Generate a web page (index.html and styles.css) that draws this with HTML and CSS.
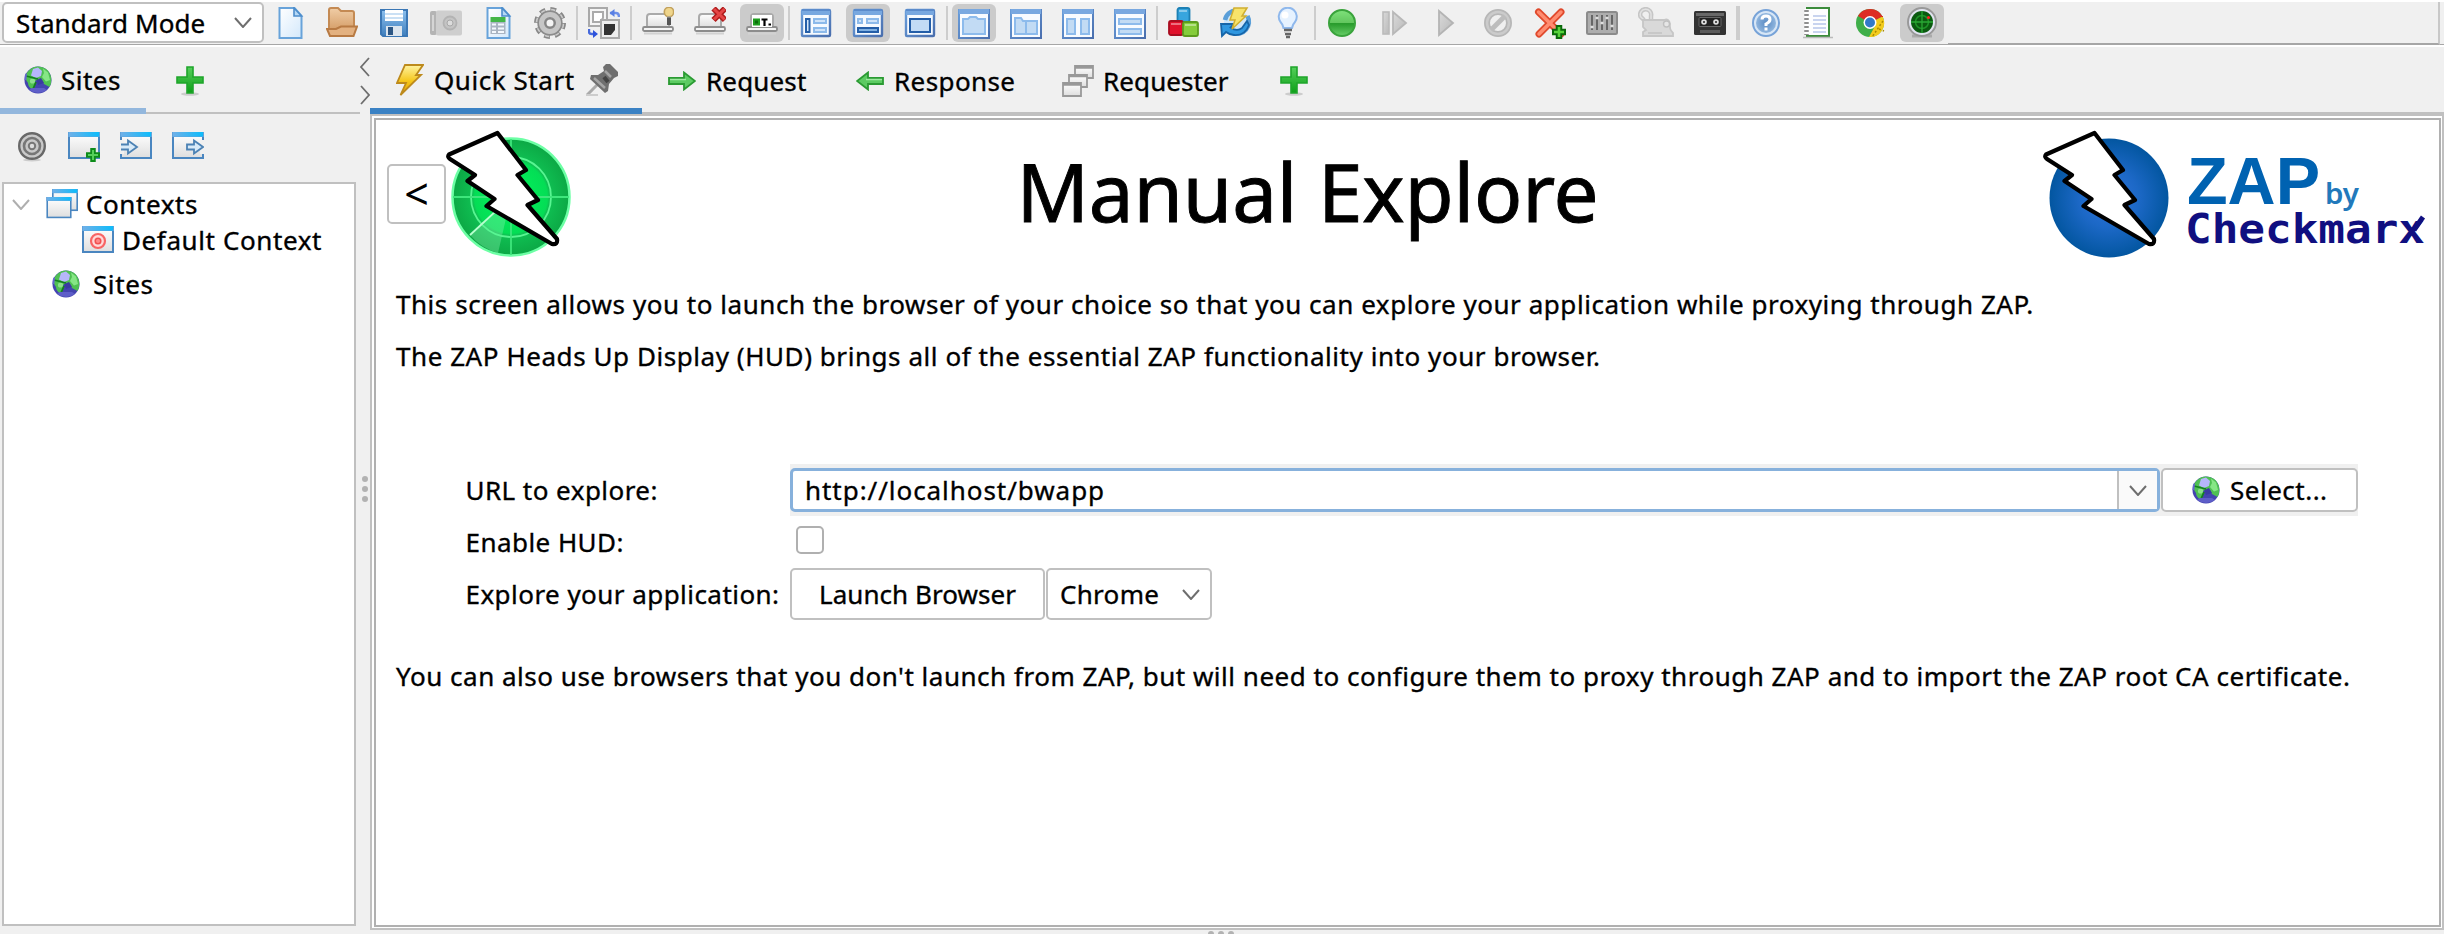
FILE: index.html
```html
<!DOCTYPE html>
<html lang="en">
<head>
<meta charset="utf-8">
<title>ZAP</title>
<link rel="stylesheet" href="styles.css">
</head>
<body>
<svg class="defs" width="0" height="0" aria-hidden="true">
  <defs>
    <linearGradient id="gPaper" x1="0" y1="0" x2="1" y2="1"><stop offset="0" stop-color="#fff"/><stop offset="1" stop-color="#d3e8fb"/></linearGradient>
    <linearGradient id="gFolder" x1="0" y1="0" x2="0" y2="1"><stop offset="0" stop-color="#f0cda6"/><stop offset="1" stop-color="#d39a63"/></linearGradient>
    <linearGradient id="gBlue" x1="0" y1="0" x2="0" y2="1"><stop offset="0" stop-color="#8cc0ee"/><stop offset="1" stop-color="#3f7fbd"/></linearGradient>
    <linearGradient id="gWin" x1="0" y1="0" x2="1" y2="1"><stop offset="0" stop-color="#6a9edb"/><stop offset="1" stop-color="#4a6fae"/></linearGradient>
    <linearGradient id="gBar" x1="0" y1="0" x2="1" y2="0"><stop offset="0" stop-color="#6fb0e8"/><stop offset="1" stop-color="#0cbcfb"/></linearGradient>
    <linearGradient id="gGrey" x1="0" y1="0" x2="0" y2="1"><stop offset="0" stop-color="#fff"/><stop offset="1" stop-color="#dedede"/></linearGradient>
    <linearGradient id="gGreen" x1="0" y1="0" x2="0" y2="1"><stop offset="0" stop-color="#7fe27b"/><stop offset=".5" stop-color="#62c65e"/><stop offset=".52" stop-color="#279a2b"/><stop offset="1" stop-color="#68cf68"/></linearGradient>
    <linearGradient id="gPlus" x1="0" y1="0" x2="0" y2="1"><stop offset="0" stop-color="#55cf5b"/><stop offset="1" stop-color="#0d9f17"/></linearGradient>
    <linearGradient id="gBolt" x1="0" y1="0" x2="0" y2="1"><stop offset="0" stop-color="#fff3a0"/><stop offset=".55" stop-color="#f5c518"/><stop offset="1" stop-color="#e3a400"/></linearGradient>
    <linearGradient id="gDis" x1="0" y1="0" x2="1" y2="1"><stop offset="0" stop-color="#dadada"/><stop offset="1" stop-color="#b9b9b9"/></linearGradient>
    <linearGradient id="gRed" x1="0" y1="0" x2="0" y2="1"><stop offset="0" stop-color="#ff9a80"/><stop offset="1" stop-color="#f0431f"/></linearGradient>
    <radialGradient id="gHelp"><stop offset="0" stop-color="#5c8cc4"/><stop offset="1" stop-color="#8fb5de"/></radialGradient>
    <radialGradient id="gLogoG"><stop offset="0" stop-color="#00f85c"/><stop offset=".62" stop-color="#04dd55"/><stop offset=".66" stop-color="#0fbf52"/><stop offset="1" stop-color="#0ca845"/></radialGradient>
    <radialGradient id="gLogoB"><stop offset="0" stop-color="#2e74dc"/><stop offset=".5" stop-color="#1c68c6"/><stop offset="1" stop-color="#0356a0"/></radialGradient>
  </defs>

  <symbol id="i-doc" viewBox="0 0 32 32"><path d="M5.500 1H20.500L27.500 9V31H5.500Z" fill="url(#gPaper)" stroke="#68a3da" stroke-width="2"/><path d="M20 1V9H27.500Z" fill="#b5d8f6" stroke="#4d8dcb" stroke-width="1.600"/></symbol>
  <symbol id="i-folder" viewBox="0 0 32 32"><path d="M3 23V3Q3 1 5 1H12L15 4H26Q28 4 28 6V25Z" fill="url(#gFolder)" stroke="#c48a53" stroke-width="2"/><path d="M1 22H10L15 19.500H31L27.500 29H4Z" fill="#e3b180" stroke="#b87a43" stroke-width="2"/></symbol>
  <symbol id="i-save" viewBox="0 0 32 32"><path d="M3 3H29V29H5L3 27Z" fill="url(#gBlue)" stroke="#3b77b5" stroke-width="2"/><rect x="7" y="3" width="18" height="11" fill="#fff"/><path d="M7 7H25M7 11H25" stroke="#b9d6f1" stroke-width="1.500"/><rect x="8" y="19" width="16" height="10" fill="#dce5ee"/><rect x="10" y="20" width="5" height="8" fill="#2c5684"/></symbol>
  <symbol id="i-camera" viewBox="0 0 32 32"><rect x="0" y="4" width="7" height="24" rx="2" fill="#b4b4b4"/><rect x="6" y="3.500" width="26" height="25" rx="2" fill="#cecece"/><path d="M3 8V24" stroke="#d5d5d5" stroke-width="2"/><circle cx="20" cy="16" r="6.500" fill="#c4c4c4" stroke="#b3b3b3" stroke-width="1.800"/><circle cx="20" cy="16" r="3" fill="#dcdcdc" stroke="#a8a8a8"/></symbol>
  <symbol id="i-report" viewBox="0 0 32 32"><use href="#i-doc" width="32" height="32"/><rect x="8.500" y="10" width="15" height="5" fill="#43b649"/><path d="M8.500 15H23.500V27H8.500Z" fill="#a9b4c2"/><path d="M10 17.500H14M16 17.500H22M10 21.500H14M16 21.500H22M10 25H14M16 25H22" stroke="#f3f8fd" stroke-width="2"/></symbol>
  <symbol id="i-gear" viewBox="0 0 32 32"><circle cx="16" cy="16" r="13.500" fill="none" stroke="#878787" stroke-width="5" stroke-dasharray="5.600 5"/><circle cx="16" cy="16" r="13" fill="none" stroke="#ccc" stroke-width="2.600" stroke-dasharray="4 6.200" stroke-dashoffset="-.8"/><circle cx="16" cy="16" r="8.700" fill="none" stroke="#8b8b8b" stroke-width="8"/><circle cx="16" cy="16" r="8.500" fill="none" stroke="#c6c6c6" stroke-width="5"/><circle cx="16" cy="16" r="4.400" fill="#f4f4f4" stroke="#858585" stroke-width="1.800"/></symbol>
  <symbol id="i-swap" viewBox="0 0 32 32"><rect x="1" y="1" width="18" height="18" fill="#f5f5f5" stroke="#a9a9a9" stroke-width="2"/><path d="M5 5H15V11L12 15H5Z" fill="#fff" stroke="#aaa" stroke-width="2"/><rect x="13" y="13" width="18" height="18" fill="#eee" stroke="#aaa" stroke-width="2"/><path d="M17 17H27V23L23 28H16V17Z" fill="#333"/><path d="M22 6H28Q31 6 31 10" fill="none" stroke="#6e90e8" stroke-width="2.400"/><path d="M21.500 6L26.500 2V10Z" fill="#5a80e4"/><path d="M1 22V25Q1 27 4 27H6" fill="none" stroke="#4669dc" stroke-width="2.400"/><path d="M10 27L5 23V31Z" fill="#2e53dc"/></symbol>
  <symbol id="i-laptop" viewBox="0 0 32 32"><path d="M5 20V10Q5 7 8 7H24Q27 7 27 10V20Z" fill="url(#gGrey)" stroke="#aaa" stroke-width="2"/><rect x="1" y="20" width="30" height="4" rx="1.500" fill="#f4f4f4" stroke="#8d8d8d" stroke-width="1.800"/><path d="M2 26.500H30" stroke="#d2d2d2" stroke-width="2"/></symbol>
  <symbol id="i-lapbulb" viewBox="0 0 32 32"><use href="#i-laptop" width="32" height="32"/><circle cx="27" cy="5" r="4.700" fill="#efd58b" stroke="#c2a15b" stroke-width="1.600"/><rect x="25" y="10" width="4" height="8" fill="#555"/><path d="M25 10H29" stroke="#aaa"/></symbol>
  <symbol id="i-lapx" viewBox="0 0 32 32"><use href="#i-laptop" width="32" height="32"/><path d="M19.500 1.500L31 13M31 1.500L19.500 13" stroke="#b01c1c" stroke-width="6"/><path d="M20 2L30.500 12.500M30.500 2L20 12.500" stroke="#e54545" stroke-width="3"/></symbol>
  <symbol id="i-lapterm" viewBox="0 0 32 32"><use href="#i-laptop" width="32" height="32"/><rect x="6" y="8" width="20" height="12" fill="#fff"/><rect x="8" y="12.500" width="5" height="5" fill="#0a6b0a" stroke="#1d9d1d" stroke-width="2"/><path d="M15.500 12.500H21.500M18.500 12V19M22.500 17.500H25" stroke="#000" stroke-width="2.200"/></symbol>
  <symbol id="i-win" viewBox="0 0 32 32"><rect x="2" y="3" width="28" height="26" rx="1" fill="#f6faff" stroke="url(#gWin)" stroke-width="2.400"/><rect x="2" y="3" width="28" height="5" fill="#78a8e0"/><path d="M2 3H30" stroke="#5b8bcb" stroke-width="2"/></symbol>
  <symbol id="i-lay1" viewBox="0 0 32 32"><use href="#i-win" width="32" height="32"/><rect x="6" y="12" width="3.500" height="13" fill="#d4e6fa" stroke="#245ea8" stroke-width="2"/><rect x="14" y="12" width="12" height="4" fill="#cfe3f9" stroke="#8dbaea" stroke-width="2"/><rect x="14" y="21" width="12" height="4" fill="#cfe3f9" stroke="#8dbaea" stroke-width="2"/></symbol>
  <symbol id="i-lay2" viewBox="0 0 32 32"><use href="#i-win" width="32" height="32"/><rect x="6" y="12" width="4" height="4" fill="#cfe3f9" stroke="#8dbaea" stroke-width="2"/><rect x="15" y="12" width="11" height="4" fill="#cfe3f9" stroke="#8dbaea" stroke-width="2"/><rect x="6" y="21" width="20" height="4" fill="#7fb0e2" stroke="#245ea8" stroke-width="2"/></symbol>
  <symbol id="i-lay3" viewBox="0 0 32 32"><use href="#i-win" width="32" height="32"/><rect x="6" y="12" width="20" height="13" fill="#c2dbf5" stroke="#245ea8" stroke-width="2"/></symbol>
  <symbol id="i-tab1" viewBox="0 0 32 32"><rect x="1" y="3" width="30" height="28" fill="#f8fbff" stroke="url(#gWin)" stroke-width="2"/><path d="M1 4.500H31" stroke="#79a8e0" stroke-width="5"/><path d="M5 12H10L12 10H18L20 12H27V27H5Z" fill="#c2dbf4" stroke="#8dbbec" stroke-width="2"/></symbol>
  <symbol id="i-tab2" viewBox="0 0 32 32"><rect x="1" y="3" width="30" height="28" fill="#f8fbff" stroke="url(#gWin)" stroke-width="2"/><path d="M1 4.500H31" stroke="#79a8e0" stroke-width="5"/><path d="M5 11H11L13 14H27V27H5ZM16 14V27" fill="#c2dbf4" stroke="#8dbbec" stroke-width="2"/></symbol>
  <symbol id="i-tab3" viewBox="0 0 32 32"><rect x="1" y="3" width="30" height="28" fill="#f8fbff" stroke="url(#gWin)" stroke-width="2"/><path d="M1 4.500H31" stroke="#79a8e0" stroke-width="5"/><path d="M5 12H13V27H5ZM19 12H27V27H19Z" fill="#c2dbf4" stroke="#8dbbec" stroke-width="2"/></symbol>
  <symbol id="i-tab4" viewBox="0 0 32 32"><rect x="1" y="3" width="30" height="28" fill="#f8fbff" stroke="url(#gWin)" stroke-width="2"/><path d="M1 4.500H31" stroke="#79a8e0" stroke-width="5"/><path d="M5 12H27V17H5ZM5 22H27V27H5Z" fill="#c2dbf4" stroke="#8dbbec" stroke-width="2"/></symbol>
  <symbol id="i-blocks" viewBox="0 0 32 32"><rect x="9.500" y="1" width="12" height="14" rx="2" fill="#37a5de" stroke="#1c80b5" stroke-width="1.800"/><rect x="1" y="14" width="14" height="14" rx="2" fill="#e0112b" stroke="#a80d20" stroke-width="1.800"/><rect x="15" y="15" width="15" height="14" rx="2" fill="#85cc3a" stroke="#5c9c1e" stroke-width="1.800"/><path d="M3 17H13M17 18H28M11 4H19" stroke="#fff" stroke-opacity=".4" stroke-width="2"/></symbol>
  <symbol id="i-refresh" viewBox="0 0 32 32"><circle cx="16" cy="14" r="12" fill="#cfe6fa"/><path d="M5 13A11.500 11.500 0 0 1 17 3.500M27.500 9A12 12 0 0 1 13 26" fill="none" stroke="#5b9fd8" stroke-width="4.500"/><path d="M1 17H14L10.500 20.500Q17 25 22 21L27 14L29 18Q25 29 14 28Q9 27.500 6 25L2 29Z" fill="#2f97e0" stroke="#1665a8" stroke-width="1.800"/><path d="M14 1H27L22 9H26L12 22L15 13H10Z" fill="#f7e36a" stroke="#cfae30" stroke-width="1.500"/></symbol>
  <symbol id="i-bulb" viewBox="0 0 32 32"><path d="M11.500 21Q11 17.500 8.500 15A9 9 0 1 1 23 15Q20.500 17.500 20 21Z" fill="#e6f2ff" stroke="#8fb8ec" stroke-width="2"/><circle cx="13" cy="8" r="3.500" fill="#fff"/><path d="M12 23H20M13 27H19M14 30H18" stroke="#666" stroke-width="2.400"/><path d="M12 25H17" stroke="#ccc" stroke-width="2"/></symbol>
  <symbol id="i-green" viewBox="0 0 32 32"><circle cx="16" cy="16" r="13" fill="url(#gGreen)" stroke="#3aa33c" stroke-width="2"/></symbol>
  <symbol id="i-step" viewBox="0 0 32 32"><rect x="5" y="5" width="6" height="22" fill="url(#gDis)" stroke="#bbb" stroke-width="1.600"/><path d="M15 5L28 16L15 27Z" fill="url(#gDis)" stroke="#b8b8b8" stroke-width="1.800"/></symbol>
  <symbol id="i-play" viewBox="0 0 32 32"><path d="M9 4L23 16L9 28Z" fill="url(#gDis)" stroke="#b4b4b4" stroke-width="1.800"/></symbol>
  <symbol id="i-no" viewBox="0 0 32 32"><circle cx="16" cy="16" r="11" fill="none" stroke="#b7b7b7" stroke-width="6"/><circle cx="16" cy="16" r="11" fill="none" stroke="#cbcbcb" stroke-width="2.500"/><path d="M9 23L23 9" stroke="#bdbdbd" stroke-width="5"/></symbol>
  <symbol id="i-xadd" viewBox="0 0 32 32"><path d="M4.500 5L27 27M27 5L5 27" stroke="#e0492c" stroke-width="7" stroke-linecap="round"/><path d="M4.500 5L27 27M27 5L5 27" stroke="#ff8c70" stroke-width="3.500" stroke-linecap="round"/><path d="M25 18V32M18 25H32" stroke="#0a6a0a" stroke-width="6.500"/><path d="M25 20V30M20 25H30" stroke="#58d23c" stroke-width="2.600"/></symbol>
  <symbol id="i-sliders" viewBox="0 0 32 32"><rect x="1" y="5" width="30" height="22" rx="1.500" fill="#adadad" stroke="#8b8b8b" stroke-width="2"/><path d="M6 8V23M11 8V23M16 8V23M21 8V23M26 8V23" stroke="#666" stroke-width="2"/><path d="M4.500 20H7.500M9.500 11H12.500M14.500 16H17.500M19.500 11H22.500M24.500 19H27.500" stroke="#ddd" stroke-width="2.500"/></symbol>
  <symbol id="i-unlock" viewBox="0 0 36 32"><path d="M6 13L2.500 9.500A5.500 5.500 0 1 1 13 9V12" fill="none" stroke="#c6c6c6" stroke-width="4.500"/><path d="M6 13L2.500 9.500A5.500 5.500 0 1 1 13 9V12" fill="none" stroke="#e2e2e2" stroke-width="1.500"/><path d="M5 13H26Q31 11 32 17Q31 22 35 26V29H5V25L8 23L5 20Z" fill="#d9d9d9" stroke="#c6c6c6" stroke-width="1.800"/><circle cx="28.500" cy="17" r="3" fill="#e6e6e6" stroke="#c0c0c0" stroke-width="1.400"/><path d="M10 26H24" stroke="#c8c8c8" stroke-width="2"/></symbol>
  <symbol id="i-tape" viewBox="0 0 32 32"><rect x="0" y="4" width="32" height="24" rx="1.500" fill="#333"/><rect x="2" y="6" width="28" height="3" fill="#686868"/><rect x="5" y="10.500" width="22" height="9" rx="1" fill="#222" stroke="#666" stroke-width="1"/><circle cx="10" cy="15" r="2.800" fill="#ddd"/><circle cx="22" cy="15" r="2.800" fill="#ddd"/><circle cx="10" cy="15" r="1" fill="#222"/><circle cx="22" cy="15" r="1" fill="#222"/><path d="M6 24.500H26" stroke="#5c5c5c" stroke-width="3"/></symbol>
  <symbol id="i-help" viewBox="0 0 32 32"><circle cx="16" cy="16" r="13" fill="#d7e6f6" stroke="#77a3d8" stroke-width="2"/><circle cx="16" cy="16" r="10" fill="url(#gHelp)"/><path d="M12 12.500Q12 9 16 9T20 12.500Q20 15 16 17V19" fill="none" stroke="#fff" stroke-width="3"/><rect x="14.500" y="20.500" width="3" height="3" fill="#fff"/></symbol>
  <symbol id="i-notes" viewBox="0 0 32 32"><rect x="5" y="1" width="22" height="28" fill="#fdfeff" stroke="#3c8c3c" stroke-width="2"/><path d="M11 9H24M11 13H24M11 17H24M11 21H24M11 25H24" stroke="#c8d4ef" stroke-width="2"/><path d="M4.500 2V28" stroke="#fff" stroke-width="4"/><path d="M4.500 3V28" stroke="#8f8f8f" stroke-width="4.500" stroke-dasharray="2 2"/><path d="M1 30.500H31" stroke="#bbb" stroke-width="1.500"/></symbol>
  <symbol id="i-chrome" viewBox="0 0 32 32"><circle cx="16" cy="16" r="14" fill="#3fae49"/><path d="M16 16L4 9A14 14 0 0 1 28.500 9.500Z" fill="#dd2c25"/><path d="M16 16L28.500 9.500A14 14 0 0 1 15 30L21 19Z" fill="#f3cb1d"/><path d="M16 9.500H29" stroke="#dd2c25" stroke-width="1"/><circle cx="16" cy="15.500" r="6.500" fill="#fff"/><circle cx="16" cy="15.500" r="5" fill="#3279c8"/><path d="M29 14L18 30M25 22L30 24" stroke="#a98b00" stroke-width="1.500" stroke-dasharray="2 2"/></symbol>
  <symbol id="i-radar" viewBox="0 0 32 32"><path d="M6 29H26" stroke="#aaa" stroke-width="3"/><circle cx="16" cy="15" r="14" fill="#e2e4f0" stroke="#999" stroke-width="2"/><circle cx="16" cy="15" r="11" fill="#0b5a10"/><circle cx="16" cy="15" r="6.500" fill="none" stroke="#1e9427" stroke-width="1.500"/><path d="M16 4V26M5 15H27" stroke="#2aa834" stroke-width="1.300"/><circle cx="22.500" cy="10.500" r="1.600" fill="#f22"/></symbol>

  <symbol id="i-globe" viewBox="0 0 28 28"><circle cx="14" cy="14" r="13.500" fill="#4444b0"/><path d="M1.500 9Q6 .500 14 .500Q24 1 26.500 9Q28.500 16 25.500 21L20 18L18 14L11 15L11 19L9 24Q4 21 4 17L1.500 13Z" fill="#4fc052"/><path d="M9 3L14 1.500L18 5L17 10L12 12L7 9.500Z" fill="#b6b6fb"/><path d="M19 2.500L24 6.500L26 14L22 15.500L18 11L20 7Z" fill="#86e686"/><path d="M12 14L17 12L20 17L14 19Z" fill="#3a3aa2"/><circle cx="8.500" cy="15" r="2.600" fill="#8be08b"/><path d="M12 16L9 23M2 10L8 11.500L14 13" fill="none" stroke="#14801f" stroke-width="1.800"/><path d="M1.500 14Q1.500 9 2.500 8" stroke="#6565cf" stroke-width="2" fill="none"/><path d="M5 24Q14 30 23 24L20 22H8Z" fill="#5e5ec8"/></symbol>
  <symbol id="i-plus" viewBox="0 0 28 30"><ellipse cx="14" cy="28" rx="9" ry="1.800" fill="#ccc"/><path d="M11 1H17V11H27V17H17V27H11V17H1V11H11Z" fill="url(#gPlus)" stroke="#1fa52b" stroke-width="1.600"/></symbol>
  <symbol id="i-bolt" viewBox="0 0 28 32"><path d="M9 1H27L20 11H25L4.500 31L10 19H1Z" fill="url(#gBolt)" stroke="#bd8a1c" stroke-width="1.800"/></symbol>
  <symbol id="i-pin" viewBox="0 0 32 32"><path d="M1 31L12 20" stroke="#aaa" stroke-width="3"/><path d="M0 31H12" stroke="#ccc" stroke-width="2"/><path d="M17 3L20 0H24L32 8V12L28 14L23 20L22 27L19 29L4 15L5 11H12L18 7Z" fill="#6f6f6f"/><path d="M19 7L25 13M8 14L19 24" stroke="#a5a5a5" stroke-width="2.500"/><path d="M18 13L22 18" stroke="#444" stroke-width="4"/></symbol>
  <symbol id="i-right" viewBox="0 0 28 20"><path d="M1 7H16V1.500L27 10L16 18.500V13H1Z" fill="#5ccb62" stroke="#2a9a32" stroke-width="1.800"/><path d="M2 8.500H18" stroke="#9ee8a0" stroke-width="1.500"/></symbol>
  <symbol id="i-stack" viewBox="0 0 32 32"><g fill="url(#gGrey)" stroke="#999" stroke-width="1.800"><path d="M13 1H31V13H13Z"/><path d="M13 2.500H31" stroke-width="2.500"/><path d="M7 10H25V22H7Z"/><path d="M7 11H25" stroke-width="2.500"/><path d="M1 18H19V31H1Z"/><path d="M1 19.500H19" stroke-width="2.500"/></g></symbol>
  <symbol id="i-target" viewBox="0 0 28 30"><ellipse cx="14" cy="28" rx="9" ry="1.500" fill="#ccc"/><circle cx="14" cy="14" r="12.800" fill="#c9c9c9" stroke="#686868" stroke-width="2.400"/><circle cx="14" cy="14" r="8" fill="none" stroke="#777" stroke-width="2.600"/><circle cx="14" cy="14" r="3.200" fill="#ddd" stroke="#777" stroke-width="2"/></symbol>
  <symbol id="i-frame" viewBox="0 0 32 28"><rect x="1" y="1" width="30" height="25" fill="url(#gGrey)" stroke="#4a86c0" stroke-width="2"/><path d="M0 2.500H32" stroke="#5fa3dc" stroke-width="5"/><rect x="1" y="0" width="30" height="4.500" fill="url(#gBar)"/></symbol>
  <symbol id="i-frameplus" viewBox="0 0 32 30"><use href="#i-frame" width="32" height="28"/><path d="M25 16V30M18 23H32" stroke="#0d8c1a" stroke-width="5.500"/><path d="M25 18V28M20 23H30" stroke="#55d05a" stroke-width="2"/></symbol>
  <symbol id="i-framein" viewBox="0 0 32 30"><use href="#i-frame" width="32" height="28"/><rect x="0" y="8" width="4" height="14" fill="#f0f0f0"/><path d="M1 12.500H8V8.500L17 15L8 21.500V17.500H1" fill="#d8eaf8" stroke="#4c82b4" stroke-width="1.800"/></symbol>
  <symbol id="i-frameout" viewBox="0 0 32 30"><use href="#i-frame" width="32" height="28"/><rect x="28" y="8" width="4" height="14" fill="#f0f0f0"/><path d="M15 12.500H22V8.500L31 15L22 21.500V17.500H15Z" fill="#d8eaf8" stroke="#4c82b4" stroke-width="1.800"/></symbol>
  <symbol id="i-contexts" viewBox="0 0 32 30"><use href="#i-frame" x="6" y="0" width="26" height="23"/><use href="#i-frame" x="0" y="8" width="26" height="22"/></symbol>
  <symbol id="i-context" viewBox="0 0 32 28"><use href="#i-frame" width="32" height="28"/><circle cx="16" cy="15" r="7" fill="#ffd9d9" stroke="#f86464" stroke-width="2.200"/><circle cx="16" cy="15" r="2.800" fill="#f88" stroke="#f05050" stroke-width="1.500"/></symbol>
  <symbol id="i-zapbolt" viewBox="0 0 126 128"><path d="M51.500 3L3 24.500Q1 27 4 29L29 45L21.500 51L48.500 69L40.500 76L106 114Q112 115 111 109L81.500 75L92 70L71.500 45L80 40Z" fill="#fff" stroke="#000" stroke-width="4.200" stroke-linejoin="round"/></symbol>
</svg>

<header class="toolbar">
  <div class="mode"><span class="mode-label">Standard Mode</span><svg class="chev" viewBox="0 0 18 11"><path d="M1 1L9 10L17 1"/></svg></div>
  <div class="group">
    <span class="btn"><svg><use href="#i-doc"/></svg></span><span class="btn"><svg><use href="#i-folder"/></svg></span><span class="btn"><svg><use href="#i-save"/></svg></span><span class="btn"><svg><use href="#i-camera"/></svg></span><span class="btn"><svg><use href="#i-report"/></svg></span><span class="btn"><svg><use href="#i-gear"/></svg></span>
  </div>
  <i class="sep"></i>
  <div class="group"><span class="btn"><svg><use href="#i-swap"/></svg></span></div>
  <i class="sep"></i>
  <div class="group"><span class="btn"><svg><use href="#i-lapbulb"/></svg></span><span class="btn"><svg><use href="#i-lapx"/></svg></span><span class="btn on"><svg><use href="#i-lapterm"/></svg></span></div>
  <i class="sep"></i>
  <div class="group"><span class="btn"><svg><use href="#i-lay1"/></svg></span><span class="btn on"><svg><use href="#i-lay2"/></svg></span><span class="btn"><svg><use href="#i-lay3"/></svg></span></div>
  <i class="sep"></i>
  <div class="group"><span class="btn on"><svg><use href="#i-tab1"/></svg></span><span class="btn"><svg><use href="#i-tab2"/></svg></span><span class="btn"><svg><use href="#i-tab3"/></svg></span><span class="btn"><svg><use href="#i-tab4"/></svg></span></div>
  <i class="sep"></i>
  <div class="group"><span class="btn"><svg><use href="#i-blocks"/></svg></span><span class="btn"><svg><use href="#i-refresh"/></svg></span><span class="btn"><svg><use href="#i-bulb"/></svg></span></div>
  <i class="sep"></i>
  <div class="group"><span class="btn"><svg><use href="#i-green"/></svg></span><span class="btn"><svg><use href="#i-step"/></svg></span><span class="btn"><svg><use href="#i-play"/></svg></span><span class="btn"><svg><use href="#i-no"/></svg></span><span class="btn"><svg><use href="#i-xadd"/></svg></span><span class="btn"><svg><use href="#i-sliders"/></svg></span><span class="btn wide"><svg><use href="#i-unlock"/></svg></span><span class="btn"><svg><use href="#i-tape"/></svg></span></div>
  <i class="sep thick"></i>
  <div class="group"><span class="btn"><svg><use href="#i-help"/></svg></span><span class="btn"><svg><use href="#i-notes"/></svg></span><span class="btn"><svg><use href="#i-chrome"/></svg></span><span class="btn on"><svg><use href="#i-radar"/></svg></span></div>
  <div class="filler"></div>
</header>

<main class="workspace">
  <aside class="left">
    <nav class="tabs">
      <div class="tab tab-sites"><svg class="s28"><use href="#i-globe"/></svg><span>Sites</span></div>
      <div class="tab-plus"><svg class="plus"><use href="#i-plus"/></svg></div>
    </nav>
    <div class="tree-tools">
      <svg class="t28"><use href="#i-target"/></svg>
      <svg><use href="#i-frameplus"/></svg>
      <svg><use href="#i-framein"/></svg>
      <svg><use href="#i-frameout"/></svg>
    </div>
    <div class="tree">
      <div class="node root"><svg class="chev pale" viewBox="0 0 18 11"><path d="M1 1L9 10L17 1"/></svg><svg class="ic"><use href="#i-contexts"/></svg><span>Contexts</span></div>
      <div class="node child"><svg class="ic28"><use href="#i-context"/></svg><span>Default Context</span></div>
      <div class="node sites"><svg class="s28"><use href="#i-globe"/></svg><span>Sites</span></div>
    </div>
  </aside>
  <div class="divider">
    <svg class="arrows" viewBox="0 0 10 48"><path d="M9 1L1 10L9 19M1 29L9 38L1 47"/></svg>
    <span class="grip"><i></i><i></i><i></i></span>
  </div>
  <section class="right">
    <nav class="tabs">
      <div class="tab tab-quick"><svg class="bolt"><use href="#i-bolt"/></svg><span class="t-quick">Quick Start</span><svg class="s32"><use href="#i-pin"/></svg></div>
      <div class="tab tab-req"><svg class="arrow"><use href="#i-right"/></svg><span class="t-req">Request</span></div>
      <div class="tab tab-res"><svg class="arrow flip"><use href="#i-right"/></svg><span class="t-res">Response</span></div>
      <div class="tab tab-rqr"><svg class="s32"><use href="#i-stack"/></svg><span class="t-rqr">Requester</span></div>
      <div class="tab-plus"><svg class="plus"><use href="#i-plus"/></svg></div>
    </nav>
    <div class="frame">
      <div class="page">
        <div class="hero">
          <div class="back">&lt;</div>
          <svg class="logo" viewBox="0 0 126 128">
            <circle cx="65" cy="67" r="58.500" fill="url(#gLogoG)" stroke="#6dffa5" stroke-width="2.500"/>
            <path d="M65 67L24 105Q35 118 52 123Z" fill="#8ff0b4" fill-opacity=".35"/>
            <circle cx="65" cy="67" r="40" fill="none" stroke="#58f592" stroke-width="1.800"/>
            <path d="M65 9V125M7 67H123" stroke="#3ee67c" stroke-width="1.800"/>
            <path d="M65 67L24 105" stroke="#b9ffd0" stroke-width="1.800"/>
            <use href="#i-zapbolt" width="126" height="128"/>
          </svg>
          <h1>Manual Explore</h1>
          <svg class="brand" viewBox="0 0 386 128">
            <circle cx="66" cy="68" r="59.500" fill="url(#gLogoB)"/>
            <use href="#i-zapbolt" width="126" height="128"/>
            <text class="b-zap" x="144" y="74" textLength="133" lengthAdjust="spacingAndGlyphs">ZAP</text>
            <text class="b-by" x="282" y="74" textLength="34" lengthAdjust="spacingAndGlyphs">by</text>
            <text class="b-cmx" x="142" y="113" textLength="240" lengthAdjust="spacingAndGlyphs">Checkmarx</text>
            <path d="M371 100L380 87" stroke="#100f80" stroke-width="5"/>
          </svg>
        </div>
        <p class="p1">This screen allows you to launch the browser of your choice so that you can explore your application while proxying through ZAP.</p>
        <p class="p2">The ZAP Heads Up Display (HUD) brings all of the essential ZAP functionality into your browser.</p>
        <div class="form">
          <label class="l1">URL to explore:</label>
          <div class="url-row">
            <div class="url"><span class="url-text">http://localhost/bwapp</span><span class="drop"><svg class="chev" viewBox="0 0 18 11"><path d="M1 1L9 10L17 1"/></svg></span></div>
            <div class="select"><svg class="s28"><use href="#i-globe"/></svg><span>Select...</span></div>
          </div>
          <label class="l2">Enable HUD:</label>
          <div class="check-row"><span class="check"></span></div>
          <label class="l3">Explore your application:</label>
          <div class="launch-row">
            <div class="launch">Launch Browser</div>
            <div class="browser"><span>Chrome</span><svg class="chev" viewBox="0 0 18 11"><path d="M1 1L9 10L17 1"/></svg></div>
          </div>
        </div>
        <p class="p3">You can also use browsers that you don't launch from ZAP, but will need to configure them to proxy through ZAP and to import the ZAP root CA certificate.</p>
      </div>
    </div>
    <span class="grip flat"><i></i><i></i><i></i></span>
  </section>
</main>
</body>
</html>
```
FILE: styles.css
```css
* { box-sizing: border-box; }
body {
  margin: 0;
  width: 2444px;
  height: 934px;
  overflow: hidden;
  display: flex;
  flex-direction: column;
  background: #f0f0f0;
  color: #000;
  font: 26px/30px "Noto Sans", sans-serif;
  letter-spacing: 0.5px;
  white-space: nowrap;
  -webkit-text-stroke: 0.35px #000;
}
svg { display: block; flex: none; }
.defs { position: absolute; }

.toolbar {
  display: flex;
  flex: none;
  height: 47px;
  padding-left: 2px;
  border-top: 2px solid #fff;
  border-bottom: 2px solid #fff;
  box-shadow: inset 0 -1px #a6a6a6;
}
.mode {
  display: flex;
  align-items: center;
  justify-content: space-between;
  width: 262px;
  height: 41px;
  margin-right: 4px;
  padding: 0 10px 0 12px;
  border: 2px solid #c0c0c0;
  border-radius: 5px;
  background: #fff;
}
.mode-label { letter-spacing: 0.12px; }
.chev { width: 18px; height: 11px; fill: none; stroke: #6e6e6e; stroke-width: 2; }
.chev.pale { stroke: #afafaf; }
.group { display: flex; gap: 8px; padding-top: 2px; }
.btn { display: grid; place-items: center; width: 44px; height: 38px; border-radius: 6px; }
.btn.wide { width: 48px; }
.btn.on { background: #cbcbcb; }
.btn svg { width: 32px; height: 32px; overflow: visible; }
.btn.wide svg { width: 36px; }
.sep { width: 2px; height: 34px; margin: 4px 4px 0; background: #cdcdcd; }
.sep.thick { width: 4px; }
.filler { flex: 1; margin: 0 4px; border-bottom: 2px solid #a6a6a6; border-right: 2px solid #c8c8c8; }

.workspace { display: flex; flex: 1; min-height: 0; }
.left { width: 360px; display: flex; flex-direction: column; }
.tabs { display: flex; flex: none; height: 67px; box-shadow: inset 0 -2px #c0c0c0; }
.tab { display: flex; align-items: center; height: 67px; }
.tab-sites { width: 146px; padding: 5px 0 0 24px; gap: 9px; border-bottom: 6px solid #93b7dd; }
.tab-plus { padding: 19px 0 0 30px; }
.s28 { width: 28px; height: 28px; }
.s32 { width: 32px; height: 32px; }
.plus { width: 28px; height: 30px; }
.tree-tools { display: flex; flex: none; gap: 20px; padding: 18px 0 0 18px; height: 68px; }
.tree-tools svg { width: 32px; height: 30px; }
.tree-tools .t28 { width: 28px; margin-right: 2px; }
.tree { flex: 1; margin: 0 4px 8px 2px; padding: 2px 0 0; border: 2px solid #c0c0c0; background: #fff; letter-spacing: 0.6px; }
.node { display: flex; align-items: center; height: 36px; }
.root { padding-left: 8px; }
.root .ic { width: 32px; height: 30px; margin: 0 8px 0 16px; }
.child { padding-left: 78px; gap: 8px; }
.ic28 { width: 32px; height: 28px; }
.sites { height: 52px; padding-left: 48px; gap: 13px; }

.divider { width: 10px; display: flex; flex-direction: column; align-items: center; }
.arrows { width: 10px; height: 48px; margin-top: 10px; stroke: #6e6e6e; stroke-width: 1.800; fill: none; }
.grip { display: flex; flex: none; flex-direction: column; gap: 4px; margin-top: 371px; }
.grip i { width: 6px; height: 6px; border-radius: 50%; background: #b2b2b2; }

.right { flex: 1; display: flex; flex-direction: column; min-width: 0; }
.tab-quick { width: 272px; padding: 5px 0 0 26px; border-bottom: 6px solid #3b82c4; }
.bolt { width: 28px; height: 32px; margin-right: 10px; }
.t-quick { width: 152px; letter-spacing: 0.55px; }
.tab-req { width: 188px; padding-left: 26px; }
.t-req { letter-spacing: 0.15px; }
.t-res { letter-spacing: 0.4px; }
.t-rqr { letter-spacing: 0.1px; }
.arrow { width: 28px; height: 20px; margin-right: 10px; }
.flip { transform: scaleX(-1); }
.tab-res { width: 206px; padding-left: 26px; }
.tab-rqr { width: 172px; padding-left: 26px; gap: 9px; }
.right .tab-plus { padding-left: 0; margin-left: 72px; }
.frame { flex: none; height: 816px; padding: 2px 1px 1px 2px; border: 2px solid #c0c0c0; background: #fff; }
.page { height: 809px; border: 2px solid #b0b0b0; display: flex; flex-direction: column; }
.hero { display: flex; height: 158px; padding: 10px 10px 0 11px; }
.back {
  width: 59px; height: 60px; margin-top: 34px;
  border: 2px solid #c0c0c0; border-radius: 5px;
  display: grid; place-items: center;
  font-size: 43px; line-height: 50px; letter-spacing: 0;
  -webkit-text-stroke: 0;
}
.logo { width: 126px; height: 128px; }
h1 {
  flex: 1; margin: 21px 0 0;
  text-align: center; font-size: 80px; line-height: 80px; font-weight: 400;
  letter-spacing: -0.15px;
  -webkit-text-stroke: 0.9px #000;
}
.brand { width: 386px; height: 128px; -webkit-text-stroke: 0; }
.b-zap { font: 700 66px "Liberation Sans", sans-serif; fill: #0062b1; letter-spacing: 0; }
.b-by { font: 600 29px "Noto Sans", sans-serif; fill: #2279bb; letter-spacing: 0; }
.b-cmx { font: 700 40px "DejaVu Sans Mono", monospace; fill: #100f80; letter-spacing: 0; }
p { margin: 0 0 0 20px; line-height: 52px; }
.p1 { letter-spacing: 0.54px; }
.p2 { letter-spacing: 0.56px; }
.p3 { letter-spacing: 0.515px; }
.form {
  display: grid;
  grid-template-columns: 324.500px 1568px;
  grid-template-rows: 52px 52px 52px;
  align-items: center;
  margin: 82px 0 30px 89.500px;
}
.form label { letter-spacing: 0.45px; }
.url-row { display: flex; gap: 1px; height: 52px; padding: 4px 0; background: #f0f0f0; }
.url {
  display: flex; align-items: center; justify-content: space-between;
  width: 1370px; padding-left: 12px;
  border: 3px solid #87b1dc; border-radius: 5px; background: #fff;
}
.url-text { letter-spacing: 0.95px; }
.drop { display: grid; place-items: center; width: 40px; height: 38px; border-left: 2px solid #c0c0c0; background: #fafafa; }
.select { display: flex; flex: 1; align-items: center; gap: 10px; padding-left: 29px; border: 2px solid #c0c0c0; border-radius: 5px; background: #fff; }
.check { display: block; width: 28px; height: 28px; margin: 0 0 4px 6px; border: 2px solid #b0b0b0; border-radius: 5px; background: #fff; }
.launch-row { display: flex; gap: 1px; height: 52px; }
.launch, .browser { display: flex; align-items: center; border: 2px solid #c0c0c0; border-radius: 5px; background: #fff; }
.launch { width: 255px; justify-content: center; letter-spacing: 0.05px; }
.browser { width: 166px; padding: 0 10px 0 12px; justify-content: space-between; letter-spacing: 0.3px; }
.grip.flat { flex-direction: row; margin: 1px 0 0 838px; }
```
